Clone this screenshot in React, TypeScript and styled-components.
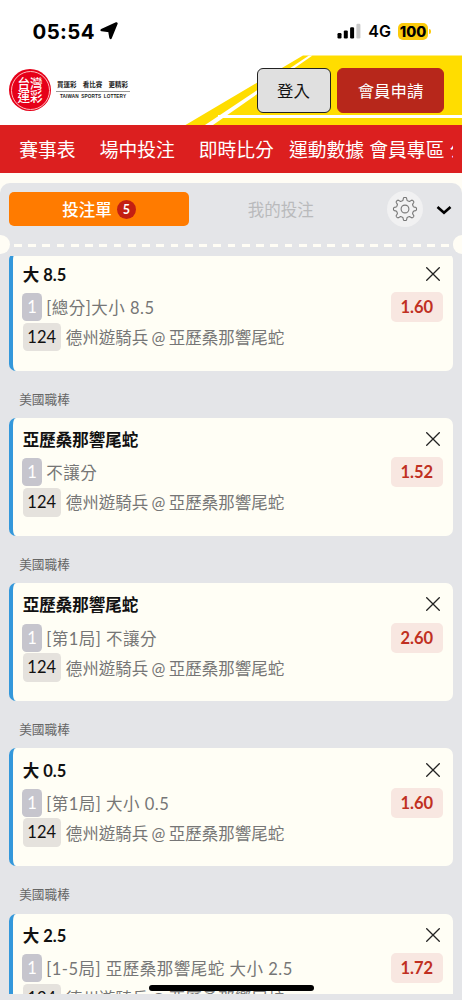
import React from 'react';
import styled, { createGlobalStyle } from 'styled-components';

const Global = createGlobalStyle`
  * { box-sizing: border-box; }
  body { margin: 0; background: #fff; font-family: Lato, "Noto Sans CJK TC", sans-serif; }
`;

const Screen = styled.div`
  width: 462px;
  height: 1000px;
  overflow: hidden;
  display: flex;
  flex-direction: column;
  background: #fffdf5;
  position: relative;
`;

const StatusBar = styled.div`
  height: 55px;
  flex: none;
  display: flex;
  align-items: center;
  justify-content: space-between;
  padding: 7px 31px 0 32.5px;
  background: #fff;
  font-family: Inter, sans-serif;
  color: #000;
`;
const StatusSide = styled.div`
  display: flex;
  align-items: center;
`;
const Clock = styled.span`
  font-size: 20.4px;
  font-weight: 650;
  letter-spacing: 0.4px;
  margin-right: 5px;
`;
const Network = styled.span`
  font-size: 16px;
  font-weight: 600;
  margin: 0 7px 0 7px;
`;
const Battery = styled.span`
  width: 30px;
  height: 17px;
  border-radius: 5px;
  background: #fccb0c;
  font-size: 14.5px;
  line-height: 17px;
  font-weight: 800;
  text-align: center;
`;
const BatteryTip = styled.span`
  width: 2px;
  height: 5px;
  margin-left: 1px;
  border-radius: 0 2px 2px 0;
  background: #fccb0c;
`;

const Header = styled.header`
  height: 70px;
  flex: none;
  position: relative;
  display: flex;
  align-items: center;
  padding: 0 18px 0 9px;
  background: #fff;
`;
const Stripes = styled.svg`
  position: absolute;
  inset: 0;
`;
const Seal = styled.div`
  position: relative;
  width: 42px;
  height: 42px;
  border-radius: 50%;
  background: #e60019;
  display: flex;
  flex-direction: column;
  align-items: center;
  justify-content: center;
  color: #fff;
  &::after {
    content: '';
    position: absolute;
    inset: 1.5px;
    border: 0.8px solid #ffb9bc;
    border-radius: 50%;
  }
`;
const SealLine = styled.span`
  font-family: "Noto Sans CJK TC", sans-serif;
  font-size: 12.6px;
  line-height: 12.8px;
  font-weight: 500;
`;
const Slogan = styled.div`
  margin-left: 5px;
  width: 74px;
  color: #222;
  display: flex;
  flex-direction: column;
`;
const SloganZh = styled.div`
  display: flex;
  justify-content: space-between;
  padding: 0 2px 1px 1px;
  font-size: 6.5px;
  line-height: 10px;
  font-weight: 700;
  border-bottom: 1px solid #999;
`;
const SloganEn = styled.div`
  font-family: "Liberation Sans", sans-serif;
  font-size: 4.7px;
  line-height: 9px;
  font-weight: 700;
  word-spacing: 1.2px;
  letter-spacing: 0.1px;
  text-align: center;
  white-space: nowrap;
`;
const HeaderButton = styled.button<{ $primary?: boolean }>`
  position: relative;
  height: 45px;
  width: ${(p) => (p.$primary ? 107 : 74)}px;
  margin-left: ${(p) => (p.$primary ? '6.5px' : 'auto')};
  padding: 0;
  border: 1.3px solid ${(p) => (p.$primary ? '#b7271b' : '#222')};
  border-radius: 6px;
  background: ${(p) => (p.$primary ? '#b7271b' : '#e0e0e0')};
  color: ${(p) => (p.$primary ? '#fff' : '#111')};
  font: 400 16.4px "Noto Sans CJK TC", sans-serif;
`;

const Nav = styled.nav`
  height: 48px;
  flex: none;
  background: #dc1f1f;
  padding: 0 9px 0 19.3px;
`;
const NavTrack = styled.div`
  height: 48px;
  overflow: hidden;
  display: flex;
  align-items: center;
`;
const NavItem = styled.span<{ $gap: number }>`
  flex: none;
  margin-right: ${(p) => p.$gap}px;
  font-family: "Noto Sans CJK TC", sans-serif;
  font-size: 18.8px;
  line-height: 48px;
  color: #fff;
`;

const Panel = styled.main`
  margin-top: 10px;
  height: 817px;
  flex: none;
  background: #e4e5e8;
  border-radius: 10px 10px 0 0;
  display: flex;
  flex-direction: column;
`;
const Tabs = styled.div`
  height: 52px;
  flex: none;
  display: flex;
  align-items: center;
  padding: 0 9.5px 0 9.3px;
`;
const Tab = styled.div<{ $active?: boolean }>`
  width: ${(p) => (p.$active ? 179.5 : 184)}px;
  height: 34px;
  border-radius: 5px;
  display: flex;
  align-items: center;
  justify-content: center;
  gap: 5px;
  background: ${(p) => (p.$active ? '#ff7b00' : 'transparent')};
  color: ${(p) => (p.$active ? '#fff' : '#b9babc')};
  font-size: 16.5px;
  font-weight: ${(p) => (p.$active ? 500 : 400)};
`;
const Count = styled.span`
  width: 19px;
  height: 19px;
  border-radius: 50%;
  background: #c31f12;
  font-size: 12.5px;
  line-height: 19px;
  font-weight: 700;
  text-align: center;
`;
const GearButton = styled.div`
  width: 36px;
  height: 36px;
  margin-left: 14px;
  border-radius: 50%;
  background: #f1f1f2;
  display: grid;
  place-items: center;
`;
const Chevron = styled.svg`
  margin: 1px 0 0 13px;
`;

const Perforation = styled.div`
  height: 21px;
  flex: none;
  display: flex;
  align-items: center;
  justify-content: space-between;
`;
const Notch = styled.span<{ $right?: boolean }>`
  width: 9.5px;
  height: 19px;
  margin-top: -2px;
  background: #fffdf5;
  border-radius: ${(p) => (p.$right ? '10px 0 0 10px' : '0 10px 10px 0')};
`;
const Dashes = styled.span`
  flex: 1;
  height: 2.6px;
  margin: 0 4px 0 4.3px;
  background: repeating-linear-gradient(90deg, #fffdf5 0 7.7px, transparent 7.7px 14.25px);
`;

const ListViewport = styled.div`
  height: 738px;
  overflow: hidden;
  padding: 0 9.5px 0 9.3px;
`;
const List = styled.div`
  margin-top: -3.1px;
`;
const Card = styled.article`
  height: 118px;
  padding: 10.2px 9.8px 0 9.4px;
  border-left: 4px solid #3498db;
  border-radius: 7px;
  background: #fffef5;
`;
const League = styled.div`
  height: 47.2px;
  padding: 18px 0 0 9.9px;
  font-size: 12.7px;
  line-height: 20px;
  color: #666;
`;
const CardHead = styled.div`
  height: 22px;
  display: flex;
  align-items: center;
  justify-content: space-between;
  font-size: 16.5px;
  font-weight: 700;
  color: #111;
`;
const CloseIcon = styled.svg`
  margin-right: 2.7px;
`;
const BetRow = styled.div`
  height: 30px;
  margin-top: 7.2px;
  display: flex;
  align-items: center;
  color: #767676;
  font-size: 16.5px;
  letter-spacing: 0.5px;
  white-space: pre;
`;
const Tag = styled.span`
  width: 19.5px;
  height: 28px;
  margin: 0 4.5px 0 -0.5px;
  border-radius: 4.5px;
  background: #c6c5cd;
  color: #fff;
  line-height: 29px;
  letter-spacing: 0;
  text-align: center;
`;
const Odds = styled.span`
  width: 51.7px;
  height: 30px;
  margin-left: auto;
  border-radius: 5px;
  background: #f8e7e1;
  color: #c03022;
  font-weight: 700;
  line-height: 30px;
  letter-spacing: 0;
  text-align: center;
`;
const MatchRow = styled.div`
  height: 28.5px;
  margin-top: 0.6px;
  display: flex;
  align-items: center;
  font-size: 16.5px;
  color: #767676;
  white-space: pre;
  word-spacing: -0.8px;
`;
const MatchNo = styled.span`
  width: 38px;
  height: 28.5px;
  margin-right: 5px;
  border-radius: 4.5px;
  background: #e5e2dd;
  color: #111;
  line-height: 29.5px;
  text-align: center;
`;
const HomeBar = styled.div`
  position: absolute;
  left: 149px;
  top: 984.5px;
  width: 165px;
  height: 6px;
  border-radius: 3px;
  background: #000;
`;

const bets = [
  { pick: '大 8.5', kind: '[總分]大小 8.5', odds: '1.60' },
  { pick: '亞歷桑那響尾蛇', kind: '不讓分', odds: '1.52' },
  { pick: '亞歷桑那響尾蛇', kind: '[第1局] 不讓分', odds: '2.60' },
  { pick: '大 0.5', kind: '[第1局] 大小 0.5', odds: '1.60' },
  { pick: '大 2.5', kind: '[1-5局] 亞歷桑那響尾蛇 大小 2.5', odds: '1.72' },
];

const navItems: [string, number][] = [
  ['賽事表', 24],
  ['場中投注', 24],
  ['即時比分', 15],
  ['運動數據', 5.3],
  ['會員專區', 5.4],
  ['公告', 0],
];

// Closed outline of a gear with eight rounded teeth, centred on the origin.
const gearPath = (() => {
  const pts: string[] = [];
  const steps = 160;
  for (let i = 0; i < steps; i++) {
    const a = (i / steps) * Math.PI * 2;
    const r = 10.1 + 1.5 * Math.tanh(2.2 * Math.cos(8 * a) - 0.3);
    pts.push(`${(Math.sin(a) * r).toFixed(2)} ${(-Math.cos(a) * r).toFixed(2)}`);
  }
  return `M${pts.join('L')}Z`;
})();

export default function App() {
  return (
    <Screen>
      <Global />
      <StatusBar>
        <StatusSide>
          <Clock>05:54</Clock>
          <svg width="18" height="18" viewBox="0 0 17 17">
            <path d="M15.5 1.4 L10 15 L8.8 8.4 L1.6 7.6 Z" fill="#000" stroke="#000" strokeWidth="2.4" strokeLinejoin="round" />
          </svg>
        </StatusSide>
        <StatusSide>
          <svg width="24" height="16" viewBox="0 0 24 16">
            <rect x="0.5" y="10" width="4" height="5.5" rx="1.2" />
            <rect x="6.8" y="7.4" width="4" height="8.1" rx="1.2" />
            <rect x="13.1" y="4.3" width="4" height="11.2" rx="1.2" />
            <rect x="19.4" y="0.8" width="4" height="14.7" rx="1.2" fill="#c9c9c9" />
          </svg>
          <Network>4G</Network>
          <Battery>100</Battery>
          <BatteryTip />
        </StatusSide>
      </StatusBar>

      <Header>
        <Stripes width="462" height="70" viewBox="0 0 462 70">
          <path d="M303 0.5H462V70H185.5Z" fill="#ffdd00" />
          <path d="M309 0.5H312.5L213 70H205Z" fill="#fff" />
          <path d="M218 61.5H462" stroke="#fff" strokeWidth="3" />
        </Stripes>
        <Seal>
          <SealLine>台灣</SealLine>
          <SealLine>運彩</SealLine>
        </Seal>
        <Slogan>
          <SloganZh><span>買運彩</span><span>看比賽</span><span>更精彩</span></SloganZh>
          <SloganEn>TAIWAN SPORTS LOTTERY</SloganEn>
        </Slogan>
        <HeaderButton>登入</HeaderButton>
        <HeaderButton $primary>會員申請</HeaderButton>
      </Header>

      <Nav>
        <NavTrack>
          {navItems.map(([label, gap]) => (
            <NavItem key={label} $gap={gap}>{label}</NavItem>
          ))}
        </NavTrack>
      </Nav>

      <Panel>
        <Tabs>
          <Tab $active>投注單<Count>5</Count></Tab>
          <Tab>我的投注</Tab>
          <GearButton>
            <svg width="26" height="26" viewBox="-13 -13 26 26" fill="none" stroke="#777" strokeWidth="1.1" strokeLinejoin="round">
              <path d={gearPath} />
              <circle r="3.9" />
            </svg>
          </GearButton>
          <Chevron width="16" height="10" viewBox="0 0 16 10" fill="none" stroke="#000" strokeWidth="2.6">
            <path d="M1.5 2L8 7.8L14.5 2" />
          </Chevron>
        </Tabs>
        <Perforation>
          <Notch />
          <Dashes />
          <Notch $right />
        </Perforation>
        <ListViewport>
          <List>
            {bets.map((bet, i) => (
              <React.Fragment key={i}>
                {i > 0 && <League>美國職棒</League>}
                <Card>
                  <CardHead>
                    <span>{bet.pick}</span>
                    <CloseIcon width="14" height="14" viewBox="0 0 14 14" stroke="#222" strokeWidth="1.3">
                      <path d="M0.3 0.3L13.7 13.7M13.7 0.3L0.3 13.7" />
                    </CloseIcon>
                  </CardHead>
                  <BetRow>
                    <Tag>1</Tag>
                    {bet.kind}
                    <Odds>{bet.odds}</Odds>
                  </BetRow>
                  <MatchRow>
                    <MatchNo>124</MatchNo>
                    德州遊騎兵 @ 亞歷桑那響尾蛇
                  </MatchRow>
                </Card>
              </React.Fragment>
            ))}
          </List>
        </ListViewport>
      </Panel>
      <HomeBar />
    </Screen>
  );
}
